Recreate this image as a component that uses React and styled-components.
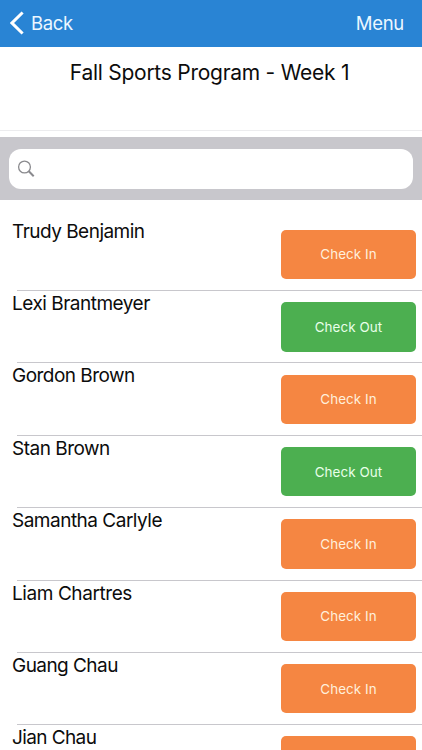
import React from "react";
import styled, { createGlobalStyle } from "styled-components";

const GlobalStyle = createGlobalStyle`
  * {
    box-sizing: border-box;
  }
  body {
    margin: 0;
    overflow: hidden;
    background-color: #ffffff;
  }
`;

const Container = styled.div`
  width: 100%;
  height: 750px;
  overflow: hidden;
  display: flex;
  flex-direction: column;
  background-color: #ffffff;
  color: #0c0c0c;
  font-family: Inter, "Liberation Sans", sans-serif;
`;

const Header = styled.header`
  flex: none;
  height: 47.4px;
  display: flex;
  justify-content: space-between;
  align-items: flex-start;
  padding: 10px 18px 0 10px;
  background-color: #2984d4;
`;

const HeaderButton = styled.button`
  display: flex;
  align-items: center;
  gap: 7px;
  height: 26px;
  padding: 0;
  border: none;
  background: none;
  color: #ecf7ff;
  font-family: inherit;
  font-size: 18.5px;
  line-height: 26px;
  letter-spacing: ${(props) => props.$spacing};
`;

const Title = styled.h1`
  flex: none;
  height: 83.6px;
  margin: 0;
  padding: 13px 3px 0 0;
  border-bottom: 1px solid #ececee;
  text-align: center;
  font-size: 21px;
  font-weight: 400;
  line-height: 26px;
  letter-spacing: -0.26px;
`;

const SearchBar = styled.div`
  flex: none;
  height: 63.4px;
  margin-top: 6px;
  padding: 12px 9px 11px;
  background-color: #c8c7cc;
`;

const SearchField = styled.label`
  display: flex;
  align-items: center;
  gap: 8px;
  height: 40px;
  padding: 0 8px;
  border-radius: 12px;
  background-color: #ffffff;
`;

const SearchInput = styled.input`
  flex: 1;
  min-width: 0;
  border: none;
  outline: none;
  background: none;
  font: inherit;
`;

const List = styled.ul`
  flex: none;
  margin: 0;
  padding: 18.2px 0 0;
  list-style: none;
`;

const Row = styled.li`
  display: flex;
  justify-content: space-between;
  align-items: flex-start;
  height: 72.4px;
  padding: 0 6px 0 12px;
  background: linear-gradient(#c8c7cc, #c8c7cc) 17px 100% / 100% 1px no-repeat;
`;

const Name = styled.span`
  font-size: 19px;
  line-height: 25px;
  letter-spacing: ${(props) => props.$spacing}px;
`;

const CheckButton = styled.button`
  width: 135px;
  height: 49.4px;
  margin-top: 11.2px;
  padding: 0;
  border: none;
  border-radius: 5px;
  background-color: ${(props) => (props.$out ? "#4caf50" : "#f58642")};
  color: ${(props) => (props.$out ? "#e9ffe9" : "#fff0dc")};
  font-family: inherit;
  font-size: 13.4px;
  letter-spacing: 0.08px;
`;

const people = [
  { name: "Trudy Benjamin", label: "Check In", spacing: -0.52 },
  { name: "Lexi Brantmeyer", label: "Check Out", spacing: -0.5, out: true },
  { name: "Gordon Brown", label: "Check In", spacing: -0.53 },
  { name: "Stan Brown", label: "Check Out", spacing: -0.5, out: true },
  { name: "Samantha Carlyle", label: "Check In", spacing: -0.5 },
  { name: "Liam Chartres", label: "Check In", spacing: -0.42 },
  { name: "Guang Chau", label: "Check In", spacing: -0.55 },
  { name: "Jian Chau", spacing: -0.6 },
];

function App() {
  return (
    <Container>
      <GlobalStyle />
      <Header>
        <HeaderButton $spacing="-0.35px">
          <svg width="14" height="24" viewBox="0 0 14 24" fill="none">
            <path d="M12.6 1.5 2 12l10.6 10.5" stroke="#ffffff" strokeWidth="3" />
          </svg>
          Back
        </HeaderButton>
        <HeaderButton $spacing="-0.3px">Menu</HeaderButton>
      </Header>
      <Title>Fall Sports Program - Week 1</Title>
      <SearchBar>
        <SearchField>
          <svg width="18" height="18" viewBox="0 0 18 18" fill="none" stroke="#8a8a8e">
            <circle cx="7.5" cy="7" r="5.9" strokeWidth="1.3" />
            <path d="m11.8 11.3 4.9 4.9" strokeWidth="2" />
          </svg>
          <SearchInput aria-label="Search" />
        </SearchField>
      </SearchBar>
      <List>
        {people.map((person) => (
          <Row key={person.name}>
            <Name $spacing={person.spacing}>{person.name}</Name>
            <CheckButton $out={person.out}>{person.label}</CheckButton>
          </Row>
        ))}
      </List>
    </Container>
  );
}

export default App;
